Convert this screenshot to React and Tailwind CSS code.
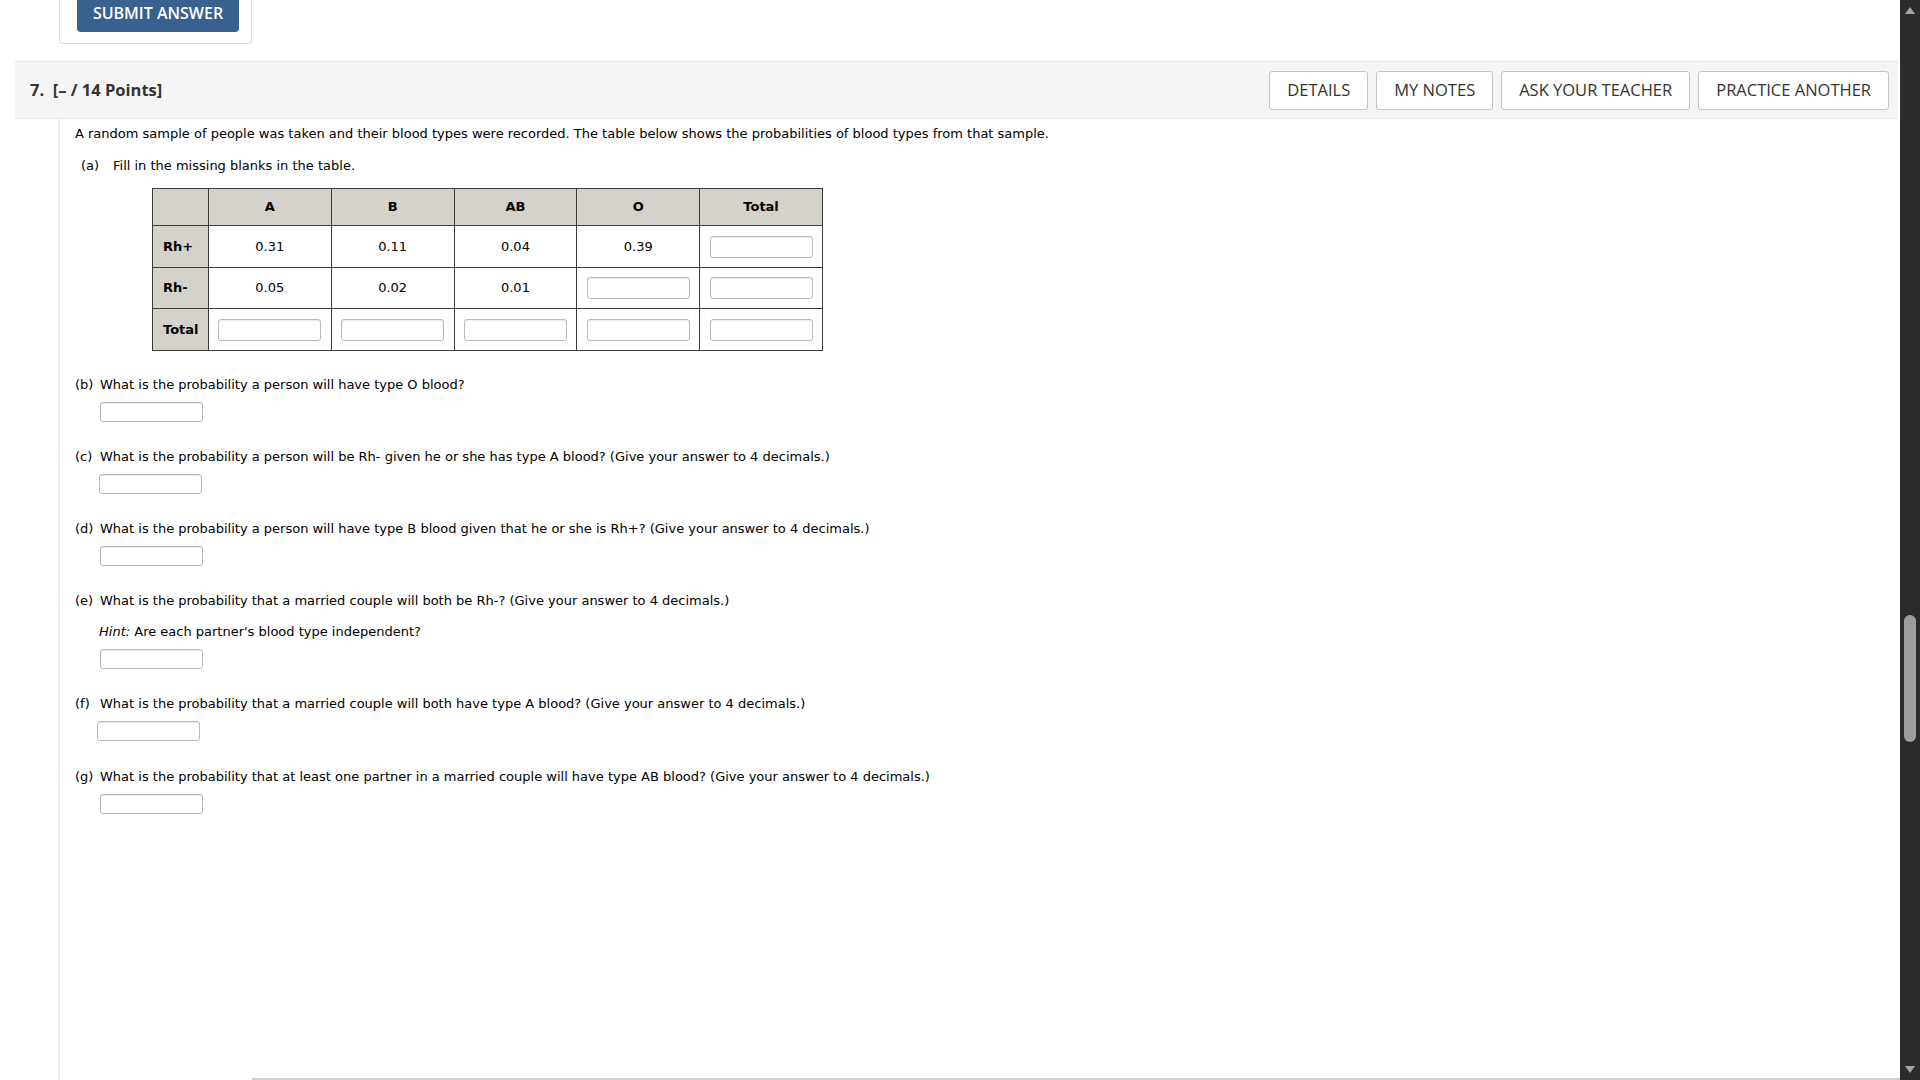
import React from "react";

const qFont = "font-['DejaVu_Sans',sans-serif]";

function Box({ className = "" }) {
  return (
    <div
      className={`h-[20px] w-[103px] rounded-[3px] border border-[#b9b9b9] bg-white shadow-[inset_0_1px_1px_rgba(0,0,0,0.08)] ${className}`}
    />
  );
}

function HeaderBtn({ children }) {
  return (
    <button className="h-[39px] rounded-[3px] border border-[#c4c4c4] bg-white px-[17px] text-[16.5px] text-[#333] font-['Open_Sans',sans-serif] leading-none">
      {children}
    </button>
  );
}

function Question({ label, text, className = "" }) {
  return (
    <div className={`flex leading-[16px] ${className}`}>
      <span className="w-[25px] shrink-0">{label}</span>
      <span>{text}</span>
    </div>
  );
}

export default function App() {
  const head = "bg-[#d5d2cb] font-bold";
  const cell = "border border-[#3c3c3c]";
  const cols = ["A", "B", "AB", "O", "Total"];
  return (
    <div className="flex h-screen w-full overflow-hidden bg-white">
      <div className="flex h-full w-[1900px] flex-col">
        {/* submit card */}
        <div className="ml-[59px] h-[44px] w-[193px] rounded-b-[4px] border-x border-b border-[#dcdcdc] pl-[17px]">
          <button className="flex h-[32px] w-[162px] items-center justify-center rounded-b-[4px] bg-[#38618f] pb-[7px] font-['Open_Sans',sans-serif] text-[16px] font-semibold text-white">
            SUBMIT ANSWER
          </button>
        </div>

        {/* header bar */}
        <div className="ml-[15px] mt-[17px] flex h-[58px] w-[1883px] items-center justify-between border-y border-[#e6e6e6] bg-[#f5f5f5] pl-[15px] pr-[9px]">
          <div className="font-['Open_Sans',sans-serif] text-[16.5px] font-bold text-[#333]">
            7.&nbsp;&nbsp;[– / 14 Points]
          </div>
          <div className="flex gap-[8px]">
            <HeaderBtn>DETAILS</HeaderBtn>
            <HeaderBtn>MY NOTES</HeaderBtn>
            <HeaderBtn>ASK YOUR TEACHER</HeaderBtn>
            <HeaderBtn>PRACTICE ANOTHER</HeaderBtn>
          </div>
        </div>

        {/* body */}
        <div className={`ml-[58px] flex flex-1 flex-col border-l-2 border-[#ededed] pl-[15px] pt-[7px] text-[13px] text-black ${qFont}`}>
          <div className="leading-[16px]">
            A random sample of people was taken and their blood types were recorded. The table below shows the probabilities of blood types from that sample.
          </div>
          <div className="mt-[16px] flex leading-[16px]">
            <span className="ml-[6px] w-[32px]">(a)</span>
            <span>Fill in the missing blanks in the table.</span>
          </div>

          <table className="ml-[77px] mt-[14px] w-[671px] border-collapse border border-[#3c3c3c] text-center">
            <tbody>
              <tr className="h-[37px]">
                <td className={`${cell} ${head} w-[56px]`}></td>
                {cols.map((c) => (
                  <td key={c} className={`${cell} ${head} w-[123px]`}>
                    {c}
                  </td>
                ))}
              </tr>
              <tr className="h-[42px]">
                <td className={`${cell} ${head} pl-[10px] text-left`}>Rh+</td>
                <td className={cell}>0.31</td>
                <td className={cell}>0.11</td>
                <td className={cell}>0.04</td>
                <td className={cell}>0.39</td>
                <td className={cell}>
                  <Box className="mx-auto w-[102px] h-[22px]" />
                </td>
              </tr>
              <tr className="h-[41px]">
                <td className={`${cell} ${head} pl-[10px] text-left`}>Rh-</td>
                <td className={cell}>0.05</td>
                <td className={cell}>0.02</td>
                <td className={cell}>0.01</td>
                <td className={cell}>
                  <Box className="mx-auto w-[102px] h-[22px]" />
                </td>
                <td className={cell}>
                  <Box className="mx-auto w-[102px] h-[22px]" />
                </td>
              </tr>
              <tr className="h-[42px]">
                <td className={`${cell} ${head} pl-[10px] text-left`}>Total</td>
                {[0, 1, 2, 3, 4].map((i) => (
                  <td key={i} className={cell}>
                    <Box className="mx-auto w-[102px] h-[22px]" />
                  </td>
                ))}
              </tr>
            </tbody>
          </table>

          <Question className="mt-[26px]" label="(b)" text="What is the probability a person will have type O blood?" />
          <Box className="ml-[25px] mt-[9px]" />

          <Question className="mt-[27px]" label="(c)" text="What is the probability a person will be Rh- given he or she has type A blood? (Give your answer to 4 decimals.)" />
          <Box className="ml-[24px] mt-[9px]" />

          <Question className="mt-[27px]" label="(d)" text="What is the probability a person will have type B blood given that he or she is Rh+? (Give your answer to 4 decimals.)" />
          <Box className="ml-[25px] mt-[9px]" />

          <Question className="mt-[27px]" label="(e)" text="What is the probability that a married couple will both be Rh-? (Give your answer to 4 decimals.)" />
          <div className="ml-[24px] mt-[15px] leading-[16px]">
            <i>Hint:</i> Are each partner's blood type independent?
          </div>
          <Box className="ml-[25px] mt-[9px]" />

          <Question className="mt-[27px]" label="(f)" text="What is the probability that a married couple will both have type A blood? (Give your answer to 4 decimals.)" />
          <Box className="ml-[22px] mt-[9px]" />

          <Question className="mt-[28px]" label="(g)" text="What is the probability that at least one partner in a married couple will have type AB blood? (Give your answer to 4 decimals.)" />
          <Box className="ml-[25px] mt-[9px]" />

          <div className="flex-1" />
          <div className="ml-[177px] h-[2px] bg-[#cfcfcf]" />
        </div>
      </div>

      {/* scrollbar */}
      <div className="flex h-full w-[20px] flex-col items-center justify-between bg-[#2b2b2b] py-[6px]">
        <svg width="12" height="9" viewBox="0 0 12 9">
          <path d="M6 1 L11 8 L1 8 Z" fill="#a3a3a3" />
        </svg>
        <div className="flex flex-1 flex-col w-full px-[4px]">
          <div className="h-[600px]" />
          <div className="h-[127px] w-full rounded-full bg-[#9e9e9e]" />
        </div>
        <svg width="12" height="9" viewBox="0 0 12 9">
          <path d="M1 1 L11 1 L6 8 Z" fill="#a3a3a3" />
        </svg>
      </div>
    </div>
  );
}
